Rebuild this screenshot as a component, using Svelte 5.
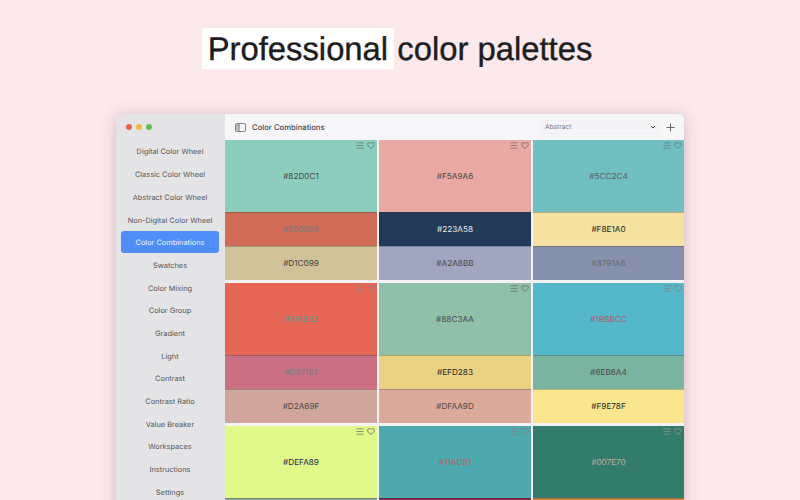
<script>
  const nav = ['Digital Color Wheel','Classic Color Wheel','Abstract Color Wheel','Non-Digital Color Wheel','Color Combinations','Swatches','Color Mixing','Color Group','Gradient','Light','Contrast','Contrast Ratio','Value Breaker','Workspaces','Instructions','Settings'];
  const cards = [
    [['#8DCDBE','#82D0C1','#4a4a4a'],['#D06C58','#E06B56','#7c7a78'],['#CFC198','#D1C099','#444444']],
    [['#EBA9A3','#F5A9A6','#4a4a4a'],['#223A58','#223A58','#e8e8e8'],['#A0A6C0','#A2A8BB','#4a4a4a']],
    [['#72BFC1','#5CC2C4','#5f5a62'],['#F5E1A0','#F8E1A0','#222222'],['#8791AD','#8791A6','#6a6a6a']],
    [['#E56654','#F16B52','#5f9598'],['#CB7083','#D57187','#6f7f85'],['#D0A69C','#D2A69F','#4a4a4a']],
    [['#90C0A8','#88C3AA','#4a4a4a'],['#EBD283','#EFD283','#222222'],['#DCAA9B','#DFAA9D','#4a4a4a']],
    [['#55B8CA','#19BBCC','#b05a5a'],['#7AB3A0','#6EB6A4','#4a4a4a'],['#F9E68F','#F9E78F','#222222']],
    [['#E0FA89','#DEFA89','#222244'],['#8DAB8F','','#444444']],
    [['#4EA9AE','#11ADB1','#b86464'],['#8E2A4A','','#dddddd']],
    [['#337C6C','#007E70','#c4a8a0'],['#DD8A3C','','#333333']]
  ];
</script>

<div class="page">
  <h1><span class="hl">Professional</span> color palettes</h1>
  <div class="window">
    <aside class="side">
      <div class="lights"><i class="r"></i><i class="y"></i><i class="g"></i></div>
      <nav>
        {#each nav as n}
          <div class="item" class:active={n === 'Color Combinations'}>{n}</div>
        {/each}
      </nav>
    </aside>
    <main class="main">
      <header class="bar">
        <svg class="sideicon" width="11" height="9" viewBox="0 0 11 9"><rect x=".5" y=".5" width="10" height="8" rx="1.2" fill="none" stroke="#666" stroke-width=".8"/><rect x="1" y="1" width="3" height="7" fill="#bbb"/><path d="M4.2 .8V8.2" stroke="#666" stroke-width=".7"/></svg>
        <span class="title">Color Combinations</span>
        <div class="select"><span>Abstract</span><svg width="6" height="4" viewBox="0 0 6 4"><path d="M1 1l2 2 2-2" fill="none" stroke="#444" stroke-width="1"/></svg></div>
        <svg class="plus" width="9" height="9" viewBox="0 0 9 9"><path d="M4.500 .5v8M.5 4.500h8" stroke="#555" stroke-width=".9"/></svg>
      </header>
      <div class="grid">
        {#each cards as c}
          <div class="card">
            {#each c as s, i}
              <div class="sw" class:big={i === 0} style="background:{s[0]};color:{s[2]}">
                {s[1]}
                {#if i === 0}
                  <div class="tools" style="color:{s[2]}">
                    <svg width="8" height="7" viewBox="0 0 8 7"><path d="M.5 .8h7M.5 3.500h7M.5 6.200h7" stroke="currentColor" stroke-width=".6"/></svg>
                    <svg width="8" height="7" viewBox="0 0 10 9"><path d="M5 8.200C2.500 6.400.7 4.800.7 2.900.7 1.600 1.700.7 2.800.7c.9 0 1.700.5 2.200 1.300C5.500 1.200 6.300.7 7.200.7c1.100 0 2.100.9 2.100 2.200 0 1.900-1.800 3.500-4.300 5.300z" fill="none" stroke="currentColor" stroke-width=".9"/></svg>
                  </div>
                {/if}
              </div>
            {/each}
          </div>
        {/each}
      </div>
    </main>
  </div>
</div>

<style>
  :global(body) { margin: 0; }
  .page {
    width: 800px; height: 500px; overflow: hidden;
    background: #fce9ec;
    font-family: Inter, "Liberation Sans", sans-serif;
    text-rendering: geometricPrecision;
    display: flex; flex-direction: column; align-items: center;
  }
  h1 {
    margin: 28px 0 45px;
    font: 400 32.8px/41px "Liberation Sans", Arial, sans-serif;
    color: #1d1d1f;
    -webkit-text-stroke: .4px #1d1d1f;
    white-space: nowrap;
  }
  .hl { background: #fff; display: inline-block; padding: 0 6px; margin-left: -6px; margin-right: -6px; }
  .window {
    width: 568px; height: 420px; flex: none;
    display: flex;
    border-radius: 6px 6px 0 0;
    overflow: hidden;
    box-shadow: 0 2px 16px rgba(90, 50, 70, .28);
  }
  .side { width: 109px; flex: none; background: #e4e4e6; }
  .lights { display: flex; gap: 4px; padding: 10px 0 0 10px; height: 16.6px; }
  .lights i { width: 6px; height: 6px; border-radius: 50%; }
  .r { background: #ec5f57; } .y { background: #f2b93e; } .g { background: #5cc548; }
  nav { display: flex; flex-direction: column; align-items: center; padding: 0 6px 0 5px; }
  .item {
    width: 98px; height: 22.7px; flex: none;
    display: flex; align-items: center; justify-content: center;
    font-size: 7.4px; color: #555558; white-space: nowrap;
    border-radius: 2px;
  }
  .active { background: #4f8ef8; color: #f0f4ff; height: 22px; margin: 0 0 .7px; border-radius: 3px; }
  .main { flex: 1; min-width: 0; background: #f6f6f8; display: flex; flex-direction: column; }
  .bar { height: 26px; flex: none; display: flex; align-items: center; padding: 0 9px 0 10px; }
  .sideicon { margin-right: 6px; }
  .title { font-size: 7.7px; font-weight: 500; color: #444448; flex: 1; }
  .select {
    width: 120px; height: 14px; box-sizing: border-box;
    display: flex; align-items: center; justify-content: space-between;
    padding: 0 3px 0 4px;
    background: #f4f4f7; border: 1px solid #f0f0f3; border-radius: 2px;
    font-size: 6.6px; color: #777;
    margin-right: 6px;
  }
  .grid {
    display: grid;
    grid-template-columns: 152px 152px 151px;
    gap: 2.5px 2px;
    background: #f4f2f4;
    flex: 1; align-content: start;
  }
  .card { display: flex; flex-direction: column; height: 140.5px; }
  .sw {
    height: 34px; flex: none; box-sizing: border-box;
    display: flex; align-items: center; justify-content: center;
    font-size: 8.2px; position: relative;
    border-top: 1px solid rgba(50, 50, 50, .3);
  }
  .sw.big { height: 71.5px; border-top: 0; }
  .tools {
    position: absolute; top: 2px; right: 2px;
    display: flex; gap: 3px; align-items: center; opacity: .8;
  }
</style>
